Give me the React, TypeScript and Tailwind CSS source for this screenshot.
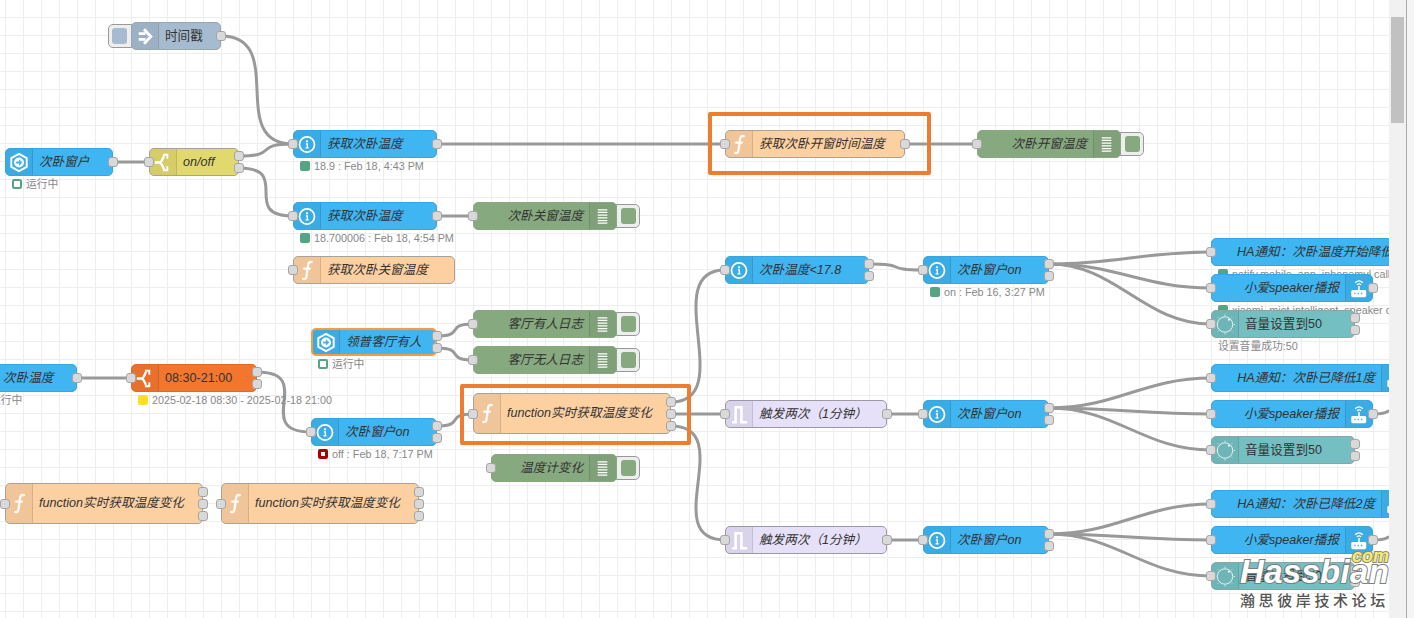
import React from 'react';

type Kind = 'blue' | 'fn' | 'yellow' | 'inject' | 'debug' | 'orange' | 'trigger' | 'api';
type Icon = 'info' | 'hex' | 'switch' | 'arrow' | 'f' | 'list' | 'pulse' | 'router' | 'dial';

type FlowNode = {
  x: number;
  y: number;
  w: number;
  h?: number;
  label: string;
  kind: Kind;
  icon: Icon;
  right?: boolean; // icon sits on the right side
  plain?: boolean; // label not italic
  selected?: boolean;
  inPort?: boolean;
  outs?: number;
  button?: boolean;
  status?: { text: string; dot?: 'green' | 'ring' | 'yellow' | 'red' };
};

const kinds: Record<Kind, string> = {
  blue: 'bg-[#3fb5f1] border-[#38a6de]',
  fn: 'bg-[#fdd0a2] border-[#a8a29a]',
  yellow: 'bg-[#e2d96e] border-[#a8a29a]',
  inject: 'bg-[#a6bbcf] border-[#9aa5b0]',
  debug: 'bg-[#87a980] border-[#87a980]',
  orange: 'bg-[#f3762f] border-[#e06a28]',
  trigger: 'bg-[#e6e0f8] border-[#9c98a8]',
  api: 'bg-[#74bfc2] border-[#8aa5a6]',
};

const nodes: FlowNode[] = [
  { x: 131, y: 22, w: 90, label: '时间戳', kind: 'inject', icon: 'arrow', plain: true, outs: 1, button: true },
  { x: 5, y: 148, w: 108, label: '次卧窗户', kind: 'blue', icon: 'hex', outs: 1, status: { text: '运行中', dot: 'ring' } },
  { x: 149, y: 148, w: 90, label: 'on/off', kind: 'yellow', icon: 'switch', inPort: true, outs: 2 },
  { x: 293, y: 130, w: 144, label: '获取次卧温度', kind: 'blue', icon: 'info', inPort: true, outs: 1, status: { text: '18.9 : Feb 18, 4:43 PM', dot: 'green' } },
  { x: 293, y: 202, w: 144, label: '获取次卧温度', kind: 'blue', icon: 'info', inPort: true, outs: 1, status: { text: '18.700006 : Feb 18, 4:54 PM', dot: 'green' } },
  { x: 293, y: 256, w: 162, label: '获取次卧关窗温度', kind: 'fn', icon: 'f', inPort: true },
  { x: 725, y: 130, w: 180, label: '获取次卧开窗时间温度', kind: 'fn', icon: 'f', inPort: true, outs: 1 },
  { x: 977, y: 130, w: 144, label: '次卧开窗温度', kind: 'debug', icon: 'list', right: true, inPort: true, button: true },
  { x: 473, y: 202, w: 144, label: '次卧关窗温度', kind: 'debug', icon: 'list', right: true, inPort: true, button: true },
  { x: 473, y: 310, w: 144, label: '客厅有人日志', kind: 'debug', icon: 'list', right: true, inPort: true, button: true },
  { x: 473, y: 346, w: 144, label: '客厅无人日志', kind: 'debug', icon: 'list', right: true, inPort: true, button: true },
  { x: 311, y: 328, w: 126, label: '领普客厅有人', kind: 'blue', icon: 'hex', selected: true, outs: 2, status: { text: '运行中', dot: 'ring' } },
  { x: -31, y: 364, w: 108, label: '次卧温度', kind: 'blue', icon: 'hex', outs: 1, status: { text: '运行中', dot: 'ring' } },
  { x: 131, y: 364, w: 126, label: '08:30-21:00', kind: 'orange', icon: 'switch', plain: true, inPort: true, outs: 2, status: { text: '2025-02-18 08:30 - 2025-02-18 21:00', dot: 'yellow' } },
  { x: 311, y: 418, w: 126, label: '次卧窗户on', kind: 'blue', icon: 'info', inPort: true, outs: 2, status: { text: 'off : Feb 18, 7:17 PM', dot: 'red' } },
  { x: 473, y: 393, w: 198, h: 41, label: 'function实时获取温度变化', kind: 'fn', icon: 'f', inPort: true, outs: 3 },
  { x: 491, y: 454, w: 126, label: '温度计变化', kind: 'debug', icon: 'list', right: true, inPort: true, button: true },
  { x: 5, y: 483, w: 198, h: 41, label: 'function实时获取温度变化', kind: 'fn', icon: 'f', inPort: true, outs: 3 },
  { x: 221, y: 483, w: 198, h: 41, label: 'function实时获取温度变化', kind: 'fn', icon: 'f', inPort: true, outs: 3 },
  { x: 725, y: 256, w: 144, label: '次卧温度<17.8', kind: 'blue', icon: 'info', inPort: true, outs: 2 },
  { x: 725, y: 400, w: 162, label: '触发两次（1分钟）', kind: 'trigger', icon: 'pulse', inPort: true, outs: 1 },
  { x: 725, y: 526, w: 162, label: '触发两次（1分钟）', kind: 'trigger', icon: 'pulse', inPort: true, outs: 1 },
  { x: 923, y: 256, w: 126, label: '次卧窗户on', kind: 'blue', icon: 'info', inPort: true, outs: 2, status: { text: 'on : Feb 16, 3:27 PM', dot: 'green' } },
  { x: 923, y: 400, w: 126, label: '次卧窗户on', kind: 'blue', icon: 'info', inPort: true, outs: 2 },
  { x: 923, y: 526, w: 126, label: '次卧窗户on', kind: 'blue', icon: 'info', inPort: true, outs: 2 },
  { x: 1211, y: 238, w: 216, label: 'HA通知：次卧温度开始降低', kind: 'blue', icon: 'router', right: true, inPort: true, status: { text: 'notify.mobile_app_iphonemyl call_service', dot: 'green' } },
  { x: 1211, y: 274, w: 162, label: '小爱speaker播报', kind: 'blue', icon: 'router', right: true, inPort: true, outs: 1, status: { text: 'xiaomi_miot.intelligent_speaker call_action', dot: 'green' } },
  { x: 1211, y: 310, w: 144, label: '音量设置到50', kind: 'api', icon: 'dial', plain: true, inPort: true, outs: 2, status: { text: '设置音量成功:50' } },
  { x: 1211, y: 364, w: 198, label: 'HA通知：次卧已降低1度', kind: 'blue', icon: 'router', right: true, inPort: true },
  { x: 1211, y: 400, w: 162, label: '小爱speaker播报', kind: 'blue', icon: 'router', right: true, inPort: true, outs: 1 },
  { x: 1211, y: 436, w: 144, label: '音量设置到50', kind: 'api', icon: 'dial', plain: true, inPort: true, outs: 2 },
  { x: 1211, y: 490, w: 198, label: 'HA通知：次卧已降低2度', kind: 'blue', icon: 'router', right: true, inPort: true },
  { x: 1211, y: 526, w: 162, label: '小爱speaker播报', kind: 'blue', icon: 'router', right: true, inPort: true, outs: 1 },
  { x: 1211, y: 562, w: 144, label: '音量设置到50', kind: 'api', icon: 'dial', plain: true, inPort: true, outs: 2 },
];

const wires: number[][] = [
  [221, 36, 293, 144],
  [113, 162, 149, 162],
  [239, 156, 293, 144],
  [239, 168, 293, 216],
  [437, 144, 725, 144],
  [905, 144, 977, 144],
  [437, 216, 473, 216],
  [437, 336, 473, 324],
  [437, 348, 473, 360],
  [77, 378, 131, 378],
  [257, 372, 311, 432],
  [437, 426, 473, 414],
  [671, 402, 725, 270],
  [671, 414, 725, 414],
  [671, 426, 725, 540],
  [869, 264, 923, 270],
  [887, 414, 923, 414],
  [887, 540, 923, 540],
  [1049, 264, 1211, 252],
  [1049, 264, 1211, 288],
  [1049, 264, 1211, 324],
  [1049, 408, 1211, 378],
  [1049, 408, 1211, 414],
  [1049, 408, 1211, 450],
  [1049, 534, 1211, 504],
  [1049, 534, 1211, 540],
  [1049, 534, 1211, 576],
  [1373, 414, 1400, 410],
  [1373, 540, 1400, 536],
];

// same curve maths as the node-red editor, scaled to this zoom level
function wirePath([x1, y1, x2, y2]: number[]) {
  const nodeWidth = 90;
  const dx = x2 - x1;
  const dy = y2 - y1;
  const delta = Math.sqrt(dx * dx + dy * dy);
  let scale = 0.75;
  if (delta < nodeWidth) scale = 0.75 - 0.75 * ((nodeWidth - delta) / nodeWidth);
  const c = scale * nodeWidth;
  return `M${x1} ${y1} C${x1 + c} ${y1} ${x2 - c} ${y2} ${x2} ${y2}`;
}

const NodeIcon = ({ icon }: { icon: Icon }) => {
  switch (icon) {
    case 'info':
      return (
        <svg viewBox="0 0 27 27" className="h-[27px] w-[27px]" fill="none" stroke="white">
          <circle cx="13.5" cy="13.5" r="7.8" strokeWidth="1.8" />
          <circle cx="13.5" cy="10.2" r="1.2" fill="white" stroke="none" />
          <path d="M12.3 12.8h1.5v4.2M12 17h3.2" strokeWidth="1.4" />
        </svg>
      );
    case 'hex':
      return (
        <svg viewBox="0 0 27 27" className="h-[27px] w-[27px]" fill="none">
          <path d="M13.5 4.500 21.500 9v9l-8 4.500-8-4.500V9z" stroke="white" strokeWidth="2" />
          <circle cx="13.5" cy="13.5" r="5.2" fill="white" />
          <path d="M10.500 12.400h3v-2.300l3.400 3.400-3.400 3.400v-2.300h-3z" fill="#3fb5f1" />
        </svg>
      );
    case 'switch':
      return (
        <svg viewBox="0 0 27 27" className="h-[27px] w-[27px]" fill="none" stroke="white" strokeWidth="2.4">
          <path d="M5 13.500h4.500c3 0 3.500-4 5-7M9.500 13.500c3 0 3.500 4 5 7" />
          <path d="M13.500 5.500h4.500v4M13.500 21.500h4.500v-4" strokeWidth="2" />
        </svg>
      );
    case 'arrow':
      return (
        <svg viewBox="0 0 27 27" className="h-[27px] w-[27px]" fill="none" stroke="white">
          <path d="M7 10.500h7M7 16.500h7" strokeWidth="3" />
          <path d="m12.500 6 7 7.500-7 7.500" strokeWidth="3" />
        </svg>
      );
    case 'f':
      return (
        <svg viewBox="0 0 27 27" className="h-[27px] w-[27px]" fill="none" stroke="white" strokeOpacity="0.92" strokeWidth="2.4" strokeLinecap="round">
          <path d="M18.500 4.800c-2.900-.6-3.600 1-3.900 3.200l-1.600 11.500c-.3 2.200-1.200 3.300-3.500 2.800M10.500 11.500h6" />
        </svg>
      );
    case 'list':
      return (
        <svg viewBox="0 0 27 27" className="h-[27px] w-[27px]" stroke="white" strokeWidth="1.300">
          <path d="M8 6.500h10M8 9.300h10M8 12.100h10M8 14.900h10M8 17.700h10M8 20.500h10" />
        </svg>
      );
    case 'pulse':
      return (
        <svg viewBox="0 0 27 27" className="h-[27px] w-[27px]" fill="none" stroke="white" strokeWidth="2.600">
          <path d="M6.500 21.500h3.500V6h6v15.500H22" />
        </svg>
      );
    case 'router':
      return (
        <svg viewBox="0 0 27 27" className="h-[27px] w-[27px]" fill="none">
          <path d="M9.500 7.500c2.500-2.300 5.500-2.300 8 0M11.300 9.700c1.500-1.200 3-1.200 4.400 0" stroke="white" strokeWidth="1.300" />
          <path d="M13.500 11v5" stroke="white" strokeWidth="1.600" />
          <rect x="5.500" y="15" width="15.500" height="7.500" rx="1.500" fill="white" />
          <path d="M8.500 18.800h1.400M12 18.800h1.400M15.500 18.800h1.400" stroke="#3fb5f1" strokeWidth="1.600" />
        </svg>
      );
    case 'dial':
      return (
        <svg viewBox="0 0 27 27" className="h-[27px] w-[27px]" fill="none" stroke="white" strokeOpacity="0.85">
          <circle cx="13.500" cy="13.500" r="8" strokeWidth="1" />
          <path d="M13.500 3.200v1.200M13.500 22.600v1.200M3.200 13.500h1.200M22.600 13.500h1.200M6.200 6.200l.8.8M20 20l.8.8M6.200 20.800l.8-.8M20 7l.8-.8" strokeWidth="1" />
          <circle cx="17.500" cy="8.500" r="1" fill="white" stroke="none" />
        </svg>
      );
  }
};

const Port = ({ left, top }: { left: number; top: number }) => (
  <div
    className="absolute h-[10px] w-[10px] rounded-[3px] border border-[#a5a5a5] bg-[#d9d9d9]"
    style={{ left: left - 5, top: top - 5 }}
  />
);

const Status = ({ node }: { node: FlowNode }) => {
  const status = node.status!;
  const h = node.h ?? 28;
  return (
    <div
      className="absolute flex h-[14px] items-center gap-[4px] whitespace-nowrap text-[10.8px] leading-none text-[#888888]"
      style={{ left: node.x + 7, top: node.y + h + 1 }}
    >
      {status.dot === 'green' && <span className="h-[10px] w-[10px] rounded-[2px] bg-[#55a583]" />}
      {status.dot === 'ring' && <span className="h-[10px] w-[10px] rounded-[2px] border-2 border-[#55a583] bg-white" />}
      {status.dot === 'yellow' && <span className="h-[10px] w-[10px] rounded-[2px] bg-[#ffdf25]" />}
      {status.dot === 'red' && <span className="h-[10px] w-[10px] rounded-[2px] border-[3px] border-[#aa0000] bg-white" />}
      <span>{status.text}</span>
    </div>
  );
};

const Node = ({ node }: { node: FlowNode }) => {
  const h = node.h ?? 28;
  const outs = node.outs ?? 0;
  const mid = node.y + h / 2;
  const iconBox = (
    <div
      className={
        'flex h-full w-[27px] shrink-0 items-center justify-center bg-black/5 ' +
        (node.right ? 'border-l border-black/10' : 'border-r border-black/10')
      }
    >
      <NodeIcon icon={node.icon} />
    </div>
  );
  const text = (
    <div
      className={
        'flex min-w-0 flex-1 items-center whitespace-nowrap text-[12.6px] text-[#333333] ' +
        (node.plain ? '' : 'italic ') +
        (node.right ? 'justify-end pr-[6px]' : 'pl-[6px]')
      }
    >
      {node.label}
    </div>
  );
  return (
    <>
      {node.status && <Status node={node} />}
      {node.button && (
        node.right ? (
          <div
            className="absolute flex h-[24px] w-[24px] items-center justify-end rounded-r-[5px] border border-[#999999] bg-[#eeeeee] pr-[3px]"
            style={{ left: node.x + node.w - 1, top: node.y + 2 }}
          >
            <div className="h-[16px] w-[15px] rounded-[3px] bg-[#87a980]" />
          </div>
        ) : (
          <div
            className="absolute flex h-[24px] w-[24px] items-center rounded-l-[5px] border border-[#999999] bg-[#eeeeee] pl-[3px]"
            style={{ left: node.x - 23, top: node.y + 2 }}
          >
            <div className="h-[16px] w-[15px] rounded-[3px] bg-[#a6bbcf]" />
          </div>
        )
      )}
      <div
        className={
          'absolute flex overflow-hidden rounded-[5px] ' +
          kinds[node.kind] +
          (node.selected ? ' border-2 border-[#ff9a3c]' : ' border')
        }
        style={{ left: node.x, top: node.y, width: node.w, height: h }}
      >
        {!node.right && iconBox}
        {text}
        {node.right && iconBox}
      </div>
      {node.inPort && <Port left={node.x} top={mid} />}
      {outs === 1 && <Port left={node.x + node.w} top={mid} />}
      {outs === 2 && (
        <>
          <Port left={node.x + node.w} top={mid - 6} />
          <Port left={node.x + node.w} top={mid + 6} />
        </>
      )}
      {outs === 3 && (
        <>
          <Port left={node.x + node.w} top={mid - 12} />
          <Port left={node.x + node.w} top={mid} />
          <Port left={node.x + node.w} top={mid + 12} />
        </>
      )}
    </>
  );
};

const Highlight = ({ cls }: { cls: string }) => (
  <div className={'absolute rounded-[2px] border-4 border-[#ed7d31] ' + cls} />
);

const App = () => {
  return (
    <div className="relative flex h-[618px] w-[1414px] overflow-hidden bg-white font-['Liberation_Sans','Noto_Sans_CJK_SC',sans-serif]">
      {/* workspace */}
      <div className="relative h-full flex-1 overflow-hidden bg-white bg-[linear-gradient(#eeeeee_1px,transparent_1px),linear-gradient(90deg,#eeeeee_1px,transparent_1px)] bg-[size:18px_18px] bg-[position:5px_17px]">
        <svg className="absolute inset-0 h-full w-full" fill="none" stroke="#999999" strokeWidth="3">
          {wires.map((w, i) => (
            <path key={i} d={wirePath(w)} />
          ))}
        </svg>
        {nodes.map((n, i) => (
          <Node key={i} node={n} />
        ))}
        <Highlight cls="left-[708px] top-[112px] h-[63px] w-[223px]" />
        <Highlight cls="left-[460px] top-[384px] h-[61px] w-[231px]" />
      </div>

      {/* scrollbar */}
      <div className="w-[17px] shrink-0 bg-[#f1f1f1] pt-[17px]">
        <div className="mx-[2px] h-[106px] bg-[#c1c1c1]" />
      </div>
      <div className="w-px shrink-0 bg-[#aaaaaa]" />
      <div className="w-[7px] shrink-0 bg-[#f5f5f5]" />

      {/* forum watermark */}
      <div className="absolute left-[1352px] top-[545px] text-[18px] font-bold italic leading-[22px] text-[#f6ea78] [-webkit-text-stroke:2px_#8a8a70] [paint-order:stroke_fill]">
        com
      </div>
      <div className="absolute left-[1240px] top-[554px] text-[33px] font-bold italic leading-[36px] tracking-[0.3px] text-white [-webkit-text-stroke:2px_#7d7d7d] [paint-order:stroke_fill]">
        Hassbian
      </div>
      <div className="absolute left-[1240px] top-[592px] text-[15px] font-medium leading-[17px] tracking-[3.6px] text-[#555555] [text-shadow:0_0_2px_white]">
        瀚思彼岸技术论坛
      </div>
    </div>
  );
};

export default App;
